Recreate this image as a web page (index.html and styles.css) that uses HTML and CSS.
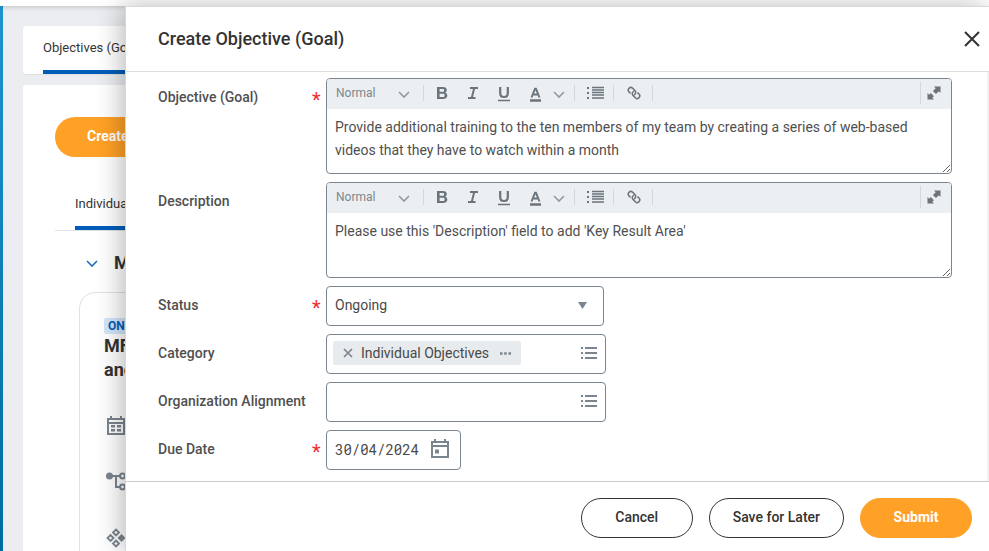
FILE: index.html
```html
<!DOCTYPE html>
<html lang="en">
<head>
<meta charset="utf-8">
<meta name="viewport" content="width=device-width, initial-scale=1">
<title>Create Objective (Goal)</title>
<link rel="stylesheet" href="styles.css">
</head>
<body>
<svg class="sprite" aria-hidden="true">
  <symbol id="i-chevron" viewBox="0 0 12 7"><path d="M1 1l5 5 5-5" fill="none" stroke="currentColor" stroke-width="1.6"/></symbol>
  <symbol id="i-bold" viewBox="0 0 12 12"><path fill-rule="evenodd" d="M1 0h6c2.400 0 3.800 1.200 3.800 3.100 0 1.200-.6 2.100-1.600 2.600 1.400.4 2.100 1.400 2.100 2.800 0 2.200-1.600 3.500-4.200 3.500H1zM3.600 2v2.800h2.900c1.100 0 1.700-.5 1.700-1.400S7.600 2 6.500 2zM3.600 6.800V10h3.200c1.200 0 1.900-.6 1.900-1.600s-.7-1.600-1.900-1.600z" fill="currentColor"/></symbol>
  <symbol id="i-italic" viewBox="0 0 10 12"><path d="M2 1H10M0 11h7.500M6.300 1L3.700 11" fill="none" stroke="currentColor" stroke-width="2"/></symbol>
  <symbol id="i-underline" viewBox="0 0 12 15"><path d="M2.200 0v6.200C2.200 8.600 3.600 10 6 10s3.800-1.400 3.800-3.800V0" fill="none" stroke="currentColor" stroke-width="2.200"/><path d="M0 13.500h12" stroke="currentColor" stroke-width="1.400"/></symbol>
  <symbol id="i-color" viewBox="0 0 11 14"><path d="M1.500 9.500L5 .8h1l3.500 8.700M3 6.500h5" fill="none" stroke="currentColor" stroke-width="1.900"/><path d="M0 12.500h11" stroke="currentColor" stroke-width="2.400"/></symbol>
  <symbol id="i-bullets" viewBox="0 0 17 12"><path d="M5 .5h12M5 3h12M5 5.500h12M5 8h12M5 11h12" stroke="currentColor" stroke-width="1.300"/><path d="M0 1h2M0 6h2M0 11h2" stroke="currentColor" stroke-width="2"/></symbol>
  <symbol id="i-link" viewBox="0 0 14 14"><g fill="none" stroke="currentColor" stroke-width="1.500" transform="rotate(45 7 7)"><path d="M5 9.800H2.800a2.600 2.600 0 0 1 0-5.200H6a2.600 2.600 0 0 1 2.300 3.800"/><path d="M9 4.200h2.200a2.600 2.600 0 0 1 0 5.200H8a2.600 2.600 0 0 1-2.300-3.800"/></g></symbol>
  <symbol id="i-expand" viewBox="0 0 14 14"><path d="M7 .5h6.500V7l-1.700-1.700-2.800 2.800-3.100-3.100 2.800-2.800zM7 13.500H.5V7l1.700 1.700 1.600-1.600 3.100 3.100-1.600 1.600z" fill="currentColor"/></symbol>
  <symbol id="i-prompt" viewBox="0 0 16 12"><path d="M4 1h12M4 6h12M4 11h12M0 1h2M0 6h2M0 11h2" stroke="currentColor" stroke-width="2"/></symbol>
  <symbol id="i-x" viewBox="0 0 16 16"><path d="M1 1l14 14M15 1L1 15" stroke="currentColor" stroke-width="2"/></symbol>
  <symbol id="i-remove" viewBox="0 0 10 10"><path d="M1 1l8 8M9 1L1 9" stroke="currentColor" stroke-width="1.700"/></symbol>
</svg>

<div class="topbar"></div>
<main class="page">
  <nav class="tabs">
    <a class="tab" href="#objectives">Objectives (Goals)</a>
  </nav>
  <section class="board">
    <button class="create" type="button">Create</button>
    <div class="subtabs"><a class="subtab" href="#individual">Individual</a></div>
    <h2 class="group"><svg width="12" height="7"><use href="#i-chevron"/></svg><span>My Objectives</span></h2>
    <article class="goal">
      <span class="badge">ONGOING</span>
      <h3>MFG<br>and</h3>
      <ul class="facts">
        <li><svg width="20" height="20" viewBox="0 0 20 20"><path d="M2 3h16v15H2zM2 7h16M5 0v3M15 0v3" fill="none" stroke="currentColor" stroke-width="2"/><path d="M5 9h4v2.500H5zM11 9h4v2.500h-4zM5 13h4v2.500H5zM11 13h4v2.500h-4z" fill="currentColor"/></svg></li>
        <li><svg width="22" height="20" viewBox="0 0 22 20"><circle cx="3.500" cy="4" r="3.500" fill="currentColor"/><path d="M6 4h8M10 4v11h4" fill="none" stroke="currentColor" stroke-width="2"/><g fill="none" stroke="currentColor" stroke-width="2"><circle cx="16.500" cy="4" r="2.400"/><circle cx="16.500" cy="15" r="2.400"/></g></svg></li>
        <li><svg width="20" height="20" viewBox="0 0 20 20"><g fill="none" stroke="currentColor" stroke-width="1.800"><path d="M10 1.500L13 4.500 10 7.500 7 4.500zM4.500 7L7.500 10 4.500 13 1.500 10zM10 12.500L13 15.500 10 18.500 7 15.500z"/></g><path d="M15.500 6l4 4-4 4-4-4z" fill="currentColor"/></svg></li>
      </ul>
    </article>
  </section>
</main>

<form class="drawer" role="dialog" aria-labelledby="drawer-title">
  <header class="drawer-head">
    <h1 id="drawer-title">Create Objective (Goal)</h1>
    <button class="icon-btn" type="button" aria-label="Close"><svg width="16" height="16"><use href="#i-x"/></svg></button>
  </header>

  <div class="drawer-body">
    <div class="row">
      <label for="objective">Objective (Goal)</label><span class="req">*</span>
      <div class="editor">
        <div class="toolbar">
          <button class="style" type="button">Normal<svg class="chev" width="12" height="7"><use href="#i-chevron"/></svg></button>
          <div class="marks">
            <button type="button" aria-label="Bold"><svg width="12" height="12"><use href="#i-bold"/></svg></button>
            <button type="button" aria-label="Italic"><svg width="10" height="12"><use href="#i-italic"/></svg></button>
            <button type="button" aria-label="Underline"><svg class="low" width="12" height="15"><use href="#i-underline"/></svg></button>
            <button class="color" type="button" aria-label="Text color"><svg class="low" width="11" height="14"><use href="#i-color"/></svg><svg class="chev" width="12" height="7"><use href="#i-chevron"/></svg></button>
          </div>
          <button class="tool" type="button" aria-label="Bulleted list"><svg width="17" height="12"><use href="#i-bullets"/></svg></button>
          <button class="tool" type="button" aria-label="Link"><svg width="14" height="14"><use href="#i-link"/></svg></button>
          <button class="expand" type="button" aria-label="Full screen"><svg width="14" height="14"><use href="#i-expand"/></svg></button>
        </div>
        <textarea id="objective">Provide additional training to the ten members of my team by creating a series of web-based videos that they have to watch within a month</textarea>
      </div>
    </div>

    <div class="row">
      <label for="description">Description</label><span class="req"></span>
      <div class="editor">
        <div class="toolbar">
          <button class="style" type="button">Normal<svg class="chev" width="12" height="7"><use href="#i-chevron"/></svg></button>
          <div class="marks">
            <button type="button" aria-label="Bold"><svg width="12" height="12"><use href="#i-bold"/></svg></button>
            <button type="button" aria-label="Italic"><svg width="10" height="12"><use href="#i-italic"/></svg></button>
            <button type="button" aria-label="Underline"><svg class="low" width="12" height="15"><use href="#i-underline"/></svg></button>
            <button class="color" type="button" aria-label="Text color"><svg class="low" width="11" height="14"><use href="#i-color"/></svg><svg class="chev" width="12" height="7"><use href="#i-chevron"/></svg></button>
          </div>
          <button class="tool" type="button" aria-label="Bulleted list"><svg width="17" height="12"><use href="#i-bullets"/></svg></button>
          <button class="tool" type="button" aria-label="Link"><svg width="14" height="14"><use href="#i-link"/></svg></button>
          <button class="expand" type="button" aria-label="Full screen"><svg width="14" height="14"><use href="#i-expand"/></svg></button>
        </div>
        <textarea id="description">Please use this 'Description' field to add 'Key Result Area'</textarea>
      </div>
    </div>

    <div class="row">
      <label for="status">Status</label><span class="req">*</span>
      <div class="field select">
        <select id="status"><option>Ongoing</option></select>
        <svg class="caret" width="9" height="7" viewBox="0 0 9 7"><path d="M0 0h9L4.500 7z" fill="currentColor"/></svg>
      </div>
    </div>

    <div class="row">
      <label for="category">Category</label><span class="req"></span>
      <div class="field prompt">
        <span class="pill"><button type="button" aria-label="Remove"><svg width="10" height="10"><use href="#i-remove"/></svg></button>Individual Objectives<button class="more" type="button" aria-label="Related actions"><svg width="11" height="3" viewBox="0 0 11 3"><path d="M0 1.500h2.500M4.200 1.500h2.500M8.500 1.500H11" stroke="currentColor" stroke-width="2.400"/></svg></button></span>
        <input id="category" type="text">
        <button type="button" aria-label="Show categories"><svg width="16" height="12"><use href="#i-prompt"/></svg></button>
      </div>
    </div>

    <div class="row">
      <label for="alignment">Organization Alignment</label><span class="req"></span>
      <div class="field prompt">
        <input id="alignment" type="text">
        <button type="button" aria-label="Show alignments"><svg width="16" height="12"><use href="#i-prompt"/></svg></button>
      </div>
    </div>

    <div class="row">
      <label for="due">Due Date</label><span class="req">*</span>
      <div class="field date">
        <input id="due" type="text" value="30/04/2024">
        <button type="button" aria-label="Open calendar"><svg width="18" height="20" viewBox="0 0 18 20"><path d="M1 3h16v15H1zM1 7h16M4 0v3M14 0v3" fill="none" stroke="currentColor" stroke-width="2"/><path d="M4 10.500h4v4H4z" fill="currentColor"/></svg></button>
      </div>
    </div>
  </div>

  <footer class="drawer-foot">
    <button class="btn" type="button">Cancel</button>
    <button class="btn" type="button">Save for Later</button>
    <button class="btn primary" type="submit">Submit</button>
  </footer>
</form>
</body>
</html>
```
FILE: styles.css
```css
* { box-sizing: border-box; }

body {
  margin: 0;
  height: 100vh;
  overflow: hidden;
  display: flex;
  flex-direction: column;
  position: relative;
  background: #ebedf0;
  color: #505050;
  font: 14px/20px Roboto, "Liberation Sans", sans-serif;
}

button, input, select, textarea {
  font: inherit;
  color: inherit;
  margin: 0;
  padding: 0;
  border: 0;
  background: none;
  outline: 0;
}

button { display: flex; align-items: center; justify-content: center; }
a { color: inherit; text-decoration: none; }
h1, h2, h3, ul { margin: 0; padding: 0; list-style: none; }
svg { display: block; flex: none; overflow: visible; }
.sprite { position: absolute; width: 0; height: 0; }
symbol { overflow: visible; }

/* Page behind the drawer */
.topbar { height: 6px; flex: none; background: #fff; box-shadow: 0 1px 5px #0003; position: relative; }

.page {
  flex: 1;
  min-height: 0;
  overflow: hidden;
  display: flex;
  flex-direction: column;
  gap: 11px;
  padding: 20px 20px 0;
  border-left: 3px solid #1178b0;
  border-image: linear-gradient(#1c94cc, #006ba0) 1;
  color: #333;
}

.tabs, .board { background: #fff; border-radius: 3px; }
.tabs { display: flex; flex: none; padding: 0 20px; height: 48px; box-shadow: 0 1px 1px #0001; }
.tab { font-size: 13px; line-height: 44px; border-bottom: 4px solid #005cb9; width: 130px; white-space: nowrap; }

.board { flex: 1 0 auto; padding: 32px; }
.create {
  height: 40px;
  padding: 0 32px 2px;
  border-radius: 20px;
  background: #ffa126;
  color: #fff;
  font-weight: 700;
}
.subtabs { display: flex; margin-top: 26px; padding-left: 20px; border-bottom: 1px solid #dfe2e6; }
.subtab { width: 120px; font-size: 13px; line-height: 42px; padding-bottom: 1px; border-bottom: 4px solid #005cb9; }
.group { display: flex; align-items: center; gap: 16px; padding: 20px 31px 17px; font-size: 18px; line-height: 24px; font-weight: 700; }
.group svg { color: #1f6fc4; }
.goal { margin-left: 24px; min-height: 320px; padding: 25px 24px; border: 1px solid #dfe2e6; border-radius: 16px; }
.badge { display: block; width: 70px; padding: 0 4px; border-radius: 2px; background: #d2e6fa; color: #005cb9; font-size: 12px; line-height: 16px; font-weight: 700; }
.goal h3 { font-size: 18px; line-height: 24px; font-weight: 700; }
.facts { display: grid; gap: 36px; margin: 34px 0 0 2px; color: #7b858f; }

/* Drawer */
.drawer {
  position: absolute;
  inset: 6px 0 0 125px;
  display: flex;
  flex-direction: column;
  background: #fff;
  border: solid #d5d7dc;
  border-width: 1px 0 0 1px;
  box-shadow: -4px 0 24px #0004;
}

.drawer-head {
  display: flex;
  align-items: center;
  justify-content: space-between;
  height: 65px;
  flex: none;
  padding: 0 9px 0 32px;
  border-bottom: 1px solid #dedede;
}
.drawer-head h1 { font-size: 18px; line-height: 24px; font-weight: 500; color: #333; }
.icon-btn { color: #333; }

.drawer-body {
  flex: 1;
  min-height: 0;
  display: flex;
  flex-direction: column;
  gap: 8px;
  padding: 6px 35px 0 32px;
  border-right: 2px solid #f0f0f0;
}

.row { display: grid; grid-template-columns: 154px 14px 1fr; align-items: start; }
.row label { font-weight: 500; line-height: 38px; white-space: nowrap; }
.req { color: #f03038; font-size: 20px; line-height: 44px; height: 38px; }

.editor, .field { border: 1px solid #7b858f; border-radius: 4px; }
.editor { overflow: hidden; height: 96px; display: flex; flex-direction: column; }
.toolbar { display: flex; align-items: center; height: 30px; padding-bottom: 2px; flex: none; background: #ebeff2; color: #6b737b; }
.toolbar > * { height: 16px; border-right: 1px solid #d3d8dc; }
.style { width: 97px; justify-content: space-between; padding: 0 13px 0 9px; font-size: 12px; color: #7f868c; }
.chev { color: #949a9f; margin-top: 2px; }
.marks { display: flex; align-items: center; justify-content: space-between; width: 151px; padding: 0 9px 0 12px; }
.color { gap: 12px; }
.low { margin-top: 3px; }
.tool { width: 39px; padding-left: 2px; }
.toolbar .expand { width: 31px; height: 22px; margin-left: auto; border-right: 0; border-left: 1px solid #d3d8dc; padding-right: 5px; }

textarea { flex: 1; width: 100%; padding: 7px 8px; line-height: 23px; resize: vertical; display: block; }

.field { display: flex; align-items: center; height: 40px; padding-bottom: 2px; background: #fff; color: #494949; }
.field input { flex: 1; min-width: 0; height: 100%; }
.field svg { color: #7b858f; }
.select { width: 278px; position: relative; }
.select select { appearance: none; width: 100%; height: 100%; padding: 0 8px; }
.caret { position: absolute; right: 16px; pointer-events: none; }
.prompt { width: 280px; padding: 0 8px 2px 6px; }
.pill { display: flex; align-items: center; gap: 8px; height: 24px; padding: 0 10px; border-radius: 2px; background: #e8ebed; }
.more { margin-left: 3px; }
.date { width: 135px; padding: 0 11px 2px 8px; }
.date input { font-family: "Roboto Mono", "Liberation Mono", monospace; }

.drawer-foot {
  display: flex;
  justify-content: flex-end;
  gap: 16px;
  height: 70px;
  flex: none;
  padding: 16px 17px 0 32px;
  border-top: 1px solid #cbcbcb;
}
.btn { min-width: 112px; height: 40px; padding: 0 23px 2px; border: 1px solid #333; border-radius: 20px; font-weight: 500; color: #333; white-space: nowrap; }
.primary { background: #ffa126; border-color: #ffa126; color: #fff; font-weight: 700; }
```
